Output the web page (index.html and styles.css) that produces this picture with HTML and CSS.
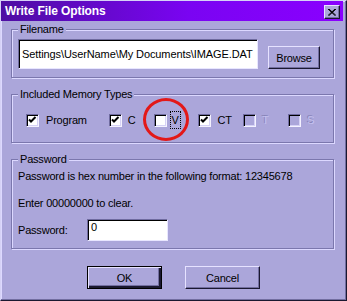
FILE: index.html
```html
<!DOCTYPE html>
<html lang="en">
<head>
  <meta charset="UTF-8">
  <title>Write File Options</title>
  <link rel="stylesheet" href="styles.css">
</head>
<body>

  <div class="window">

    <!-- title bar -->
    <div class="titlebar">
      <span class="title">Write File Options</span>
      <span class="close">
        <svg width="8" height="7" viewBox="0 0 8 7">
          <path d="M0 0 L7 6.5 M1 0 L8 6.5 M7 0 L0 6.5 M8 0 L1 6.5" stroke="#000" stroke-width="1" fill="none"/>
        </svg>
      </span>
    </div>

    <div class="content">

      <!-- Filename -->
      <div class="group group-file">
        <span class="group-label">Filename</span>
        <div class="file-row">
          <div class="textbox textbox-file">Settings\UserName\My Documents\IMAGE.DAT</div>
          <button class="btn btn-browse">Browse</button>
        </div>
      </div>

      <!-- Included Memory Types -->
      <div class="group group-mem">
        <span class="group-label">Included Memory Types</span>
        <div class="check-row">
          <label class="item item-wide"><span class="check on"></span><span class="lbl">Program</span></label>
          <label class="item"><span class="check on"></span><span class="lbl">C</span></label>
          <label class="item"><span class="check"></span><span class="lbl focus">V</span></label>
          <label class="item"><span class="check on"></span><span class="lbl">CT</span></label>
          <label class="item off"><span class="check"></span><span class="lbl">T</span></label>
          <label class="item off"><span class="check"></span><span class="lbl">S</span></label>
        </div>
        <span class="ring"></span>
      </div>

      <!-- Password -->
      <div class="group group-pass">
        <span class="group-label">Password</span>
        <p class="note">Password is hex number in the following format: 12345678</p>
        <p class="note note-clear">Enter 00000000 to clear.</p>
        <div class="pass-row">
          <span class="pass-label">Password:</span>
          <div class="textbox textbox-pass">0</div>
        </div>
      </div>

      <div class="actions">
        <button class="btn btn-default">OK</button>
        <button class="btn">Cancel</button>
      </div>

    </div>
  </div>

</body>
</html>
```

FILE: styles.css
```css
* {
  margin: 0;
  padding: 0;
  box-sizing: border-box;
}

html, body {
  width: 347px;
  height: 301px;
  background: #aba6da;
  font-family: 'Liberation Sans', Arial, sans-serif;
  font-size: 11px;
  letter-spacing: -0.2px;
  color: #000;
}

.window {
  width: 347px;
  height: 301px;
  background: #aba6da;
  border-left: 1px solid #d6d2f6;
  border-top: 1px solid #d6d2f6;
  border-right: 1px solid #1a1830;
  border-bottom: 1px solid #1a1830;
  box-shadow: inset -1px -1px #726ea0, inset 1px 1px #ddd9ff;
  padding: 0 2px 2px 0;
}

/* title bar */
.titlebar {
  height: 20px;
  margin: 0 1px 0 0;
  background: linear-gradient(to right, #4e0ea2, #7a04f2 55%, #8a00ff);
  display: flex;
  align-items: center;
  justify-content: space-between;
  padding: 0 3px 0 4px;
}

.title {
  color: #fff;
  font-weight: bold;
  font-size: 12px;
  letter-spacing: -0.1px;
}

.close {
  width: 16px;
  height: 14px;
  background: #aba6da;
  border-top: 1px solid #e6e2ff;
  border-left: 1px solid #e6e2ff;
  border-right: 1px solid #1a1830;
  border-bottom: 1px solid #1a1830;
  box-shadow: inset -1px -1px #726ea0;
  display: flex;
  align-items: center;
  justify-content: center;
  margin-top: 2px;
}

.content {
  padding: 0 0 0 10px;
}

/* group boxes */
.group {
  position: relative;
  width: 323px;
  border: 1px solid #7b77ad;
  box-shadow: inset 1px 1px #dcd8ff, 1px 1px #dcd8ff;
}

.group-label {
  position: absolute;
  top: -8px;
  left: 6px;
  padding: 0 2px;
  background: #aba6da;
  line-height: 14px;
}

.group-file {
  margin-top: 8px;
  height: 49px;
  padding: 9px 0 0 6px;
}

.file-row {
  display: flex;
  align-items: flex-end;
  gap: 10px;
}

.textbox {
  background: #fff;
  border-top: 1px solid #6f6b9f;
  border-left: 1px solid #6f6b9f;
  border-right: 1px solid #e8e6ff;
  border-bottom: 1px solid #e8e6ff;
  box-shadow: inset 1px 1px #000;
  white-space: nowrap;
  overflow: hidden;
}

.textbox-file {
  width: 240px;
  height: 30px;
  padding: 8px 0 0 3px;
  letter-spacing: -0.1px;
}

.btn {
  width: 75px;
  height: 23px;
  background: #aba6da;
  border-top: 1px solid #e6e2ff;
  border-left: 1px solid #e6e2ff;
  border-right: 1px solid #1a1830;
  border-bottom: 1px solid #1a1830;
  box-shadow: inset -1px -1px #726ea0;
  font-family: 'Liberation Sans', Arial, sans-serif;
  font-size: 11px;
  letter-spacing: -0.2px;
  color: #000;
}

.btn-browse {
  width: 52px;
}

.btn-default {
  border: 1px solid #000;
  box-shadow: inset 1px 1px #e6e2ff, inset -2px -2px #1a1830, inset -3px -3px #726ea0;
}

/* memory types */
.group-mem {
  margin-top: 16px;
  height: 49px;
  padding: 17px 0 0 14px;
}

.check-row {
  display: flex;
  align-items: center;
}

.item {
  width: 45px;
  display: flex;
  align-items: center;
  gap: 6px;
}

.item-wide {
  width: 83px;
  gap: 7px;
}

.check {
  width: 13px;
  height: 13px;
  background: #fff;
  border-top: 1px solid #6f6b9f;
  border-left: 1px solid #6f6b9f;
  border-right: 1px solid #f4f2ff;
  border-bottom: 1px solid #f4f2ff;
  box-shadow: inset 1px 1px #000, inset -1px -1px #d6d2f6;
  flex: none;
}

.check.on {
  background: #fff url("data:image/svg+xml;utf8,<svg xmlns='http://www.w3.org/2000/svg' width='11' height='11'><polyline points='2,4.5 4,6.5 8.5,2' fill='none' stroke='black' stroke-width='2'/></svg>") center/11px 11px no-repeat;
}

.lbl {
  line-height: 14px;
}

.lbl.focus {
  outline: 1px dotted #000;
  padding: 0 1px;
  margin-left: -2px;
  line-height: 16px;
}

.item.off .check {
  background: #aba6da;
}

.item.off .lbl {
  color: #c4c0ee;
  text-shadow: -1px -1px #8884b8;
}

.ring {
  position: absolute;
  left: 131px;
  top: 3px;
  width: 46px;
  height: 43px;
  border: 3px solid #e31818;
  border-radius: 50%;
}

/* password */
.group-pass {
  margin-top: 16px;
  height: 90px;
  padding: 9px 0 0 6px;
}

.note {
  line-height: 14px;
}

.note-clear {
  margin-top: 13px;
}

.pass-row {
  display: flex;
  align-items: center;
  margin-top: 9px;
}

.pass-label {
  width: 69px;
}

.textbox-pass {
  width: 81px;
  height: 22px;
  padding: 1px 0 0 3px;
}

.actions {
  display: flex;
  gap: 23px;
  margin: 17px 0 0 76px;
}
```
